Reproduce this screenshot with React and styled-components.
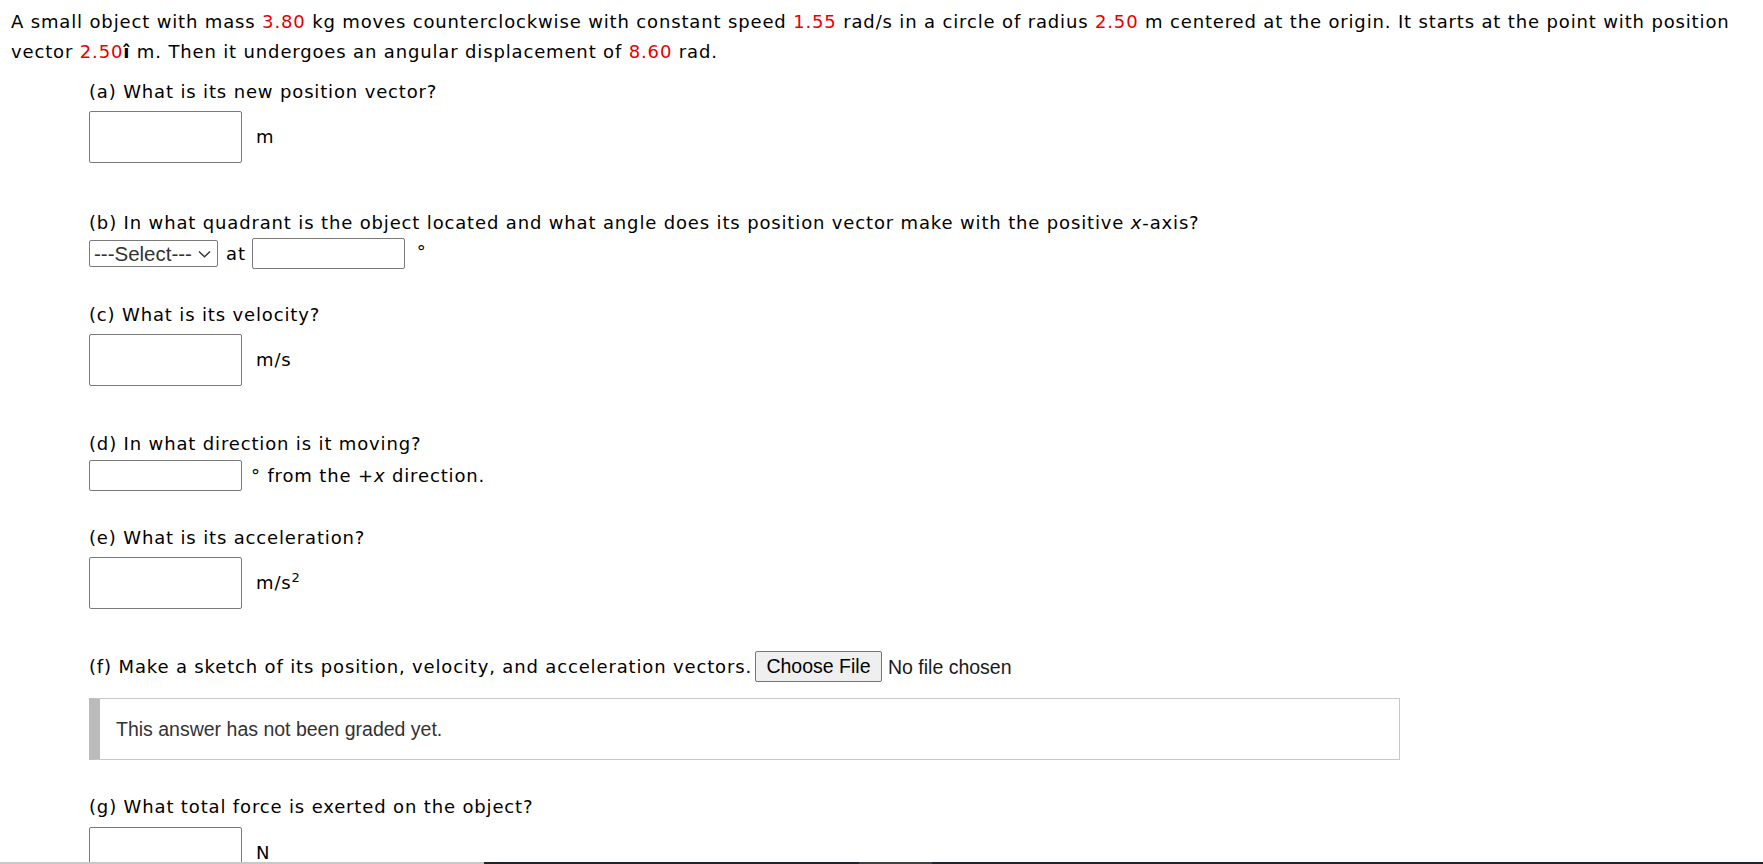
import * as React from "react"
import styled, { createGlobalStyle } from "styled-components"

const GlobalStyle = createGlobalStyle`
  html, body {
    margin: 0;
    padding: 0;
    background: #ffffff;
  }
  body {
    font-family: "DejaVu Sans", Verdana, sans-serif;
    font-size: 18px;
    letter-spacing: 0.85px;
    color: #000000;
  }
`

const Page = styled.main`
  padding: 7px 0 0 11px;
`

const Intro = styled.p`
  margin: 0;
  line-height: 30px;
`

const Red = styled.span`
  color: #e60000;
`

const Questions = styled.div`
  margin: 10px 0 0 78px;
  display: flex;
  flex-direction: column;
`

const Part = styled.section`
  margin-bottom: ${(p) => p.$gap || 31}px;
`

const Prompt = styled.div`
  line-height: 30px;
`

const Row = styled.div`
  display: flex;
  align-items: center;
  margin-top: ${(p) => p.$top || 0}px;
`

const TextBox = styled.input.attrs({ type: "text" })`
  box-sizing: border-box;
  width: ${(p) => p.$w || 153}px;
  height: ${(p) => (p.$tall ? 52 : 31)}px;
  margin: 0;
  padding: 2px 6px;
  border: 1px solid #7a7a7a;
  border-radius: 2px;
  background: #ffffff;
  font-family: "DejaVu Sans", Verdana, sans-serif;
  font-size: 18px;
  outline: none;
`

const Unit = styled.span`
  margin-left: ${(p) => (p.$near ? 9 : 14)}px;
  line-height: 30px;
  white-space: nowrap;
`

const Sup = styled.sup`
  font-size: 13px;
  line-height: 0;
  vertical-align: 7px;
`

const Word = styled.span`
  margin: 0 6px 0 8px;
`

const SelectWrap = styled.span`
  position: relative;
  display: inline-flex;
  align-items: center;
`

const Select = styled.select`
  appearance: none;
  box-sizing: border-box;
  width: 129px;
  height: 27px;
  margin: 0;
  padding: 0 22px 0 4px;
  border: 1px solid #7a7a7a;
  border-radius: 2px;
  background: #ffffff;
  color: #333333;
  font-family: "Liberation Sans", Arial, sans-serif;
  font-size: 20.5px;
  letter-spacing: 0;
  outline: none;
`

const Chevron = styled.svg`
  position: absolute;
  right: 7px;
  top: 10px;
  pointer-events: none;
`

const Degree = styled.span`
  margin-left: 12px;
  align-self: flex-start;
  line-height: 28px;
`

const FileLine = styled.div`
  display: flex;
  align-items: center;
  line-height: 30px;
`

const FileButton = styled.button`
  box-sizing: border-box;
  width: 127px;
  height: 31px;
  margin-left: 3px;
  padding: 0;
  border: 1px solid #767676;
  border-radius: 2px;
  background: #efefef;
  color: #000000;
  font-family: "Liberation Sans", Arial, sans-serif;
  font-size: 19.5px;
  letter-spacing: 0;
`

const FileStatus = styled.span`
  margin-left: 6px;
  font-family: "Liberation Sans", Arial, sans-serif;
  font-size: 19.5px;
  letter-spacing: 0;
  color: #1a1a1a;
`

const GradeNote = styled.div`
  box-sizing: border-box;
  width: 1311px;
  height: 62px;
  margin-top: 16px;
  display: flex;
  align-items: center;
  padding-left: 16px;
  border: 1px solid #c8c8c8;
  border-left: 11px solid #bbbbbb;
  font-family: "Liberation Sans", Arial, sans-serif;
  font-size: 19.5px;
  letter-spacing: 0;
  color: #333333;
`

const BottomBar = styled.div`
  position: fixed;
  left: 0;
  right: 0;
  bottom: 0;
  height: 2px;
  display: grid;
  grid-template-columns: 484px 375px 73px 1fr;
`

const BarPiece = styled.span`
  background: ${(p) => p.$c};
`

const Chev = () => (
  <Chevron width="13" height="8" viewBox="0 0 13 8">
    <path d="M1 1.5 L6.5 6.8 L12 1.5" fill="none" stroke="#333" strokeWidth="1.4" />
  </Chevron>
)

export default function App() {
  return (
    <>
      <GlobalStyle />
      <Page>
        <Intro>
          A small object with mass <Red>3.80</Red> kg moves counterclockwise with
          constant speed <Red>1.55</Red> rad/s in a circle of radius <Red>2.50</Red> m
          centered at the origin. It starts at the point with position vector{" "}
          <Red>2.50</Red>
          <b>î</b> m. Then it undergoes an angular displacement of <Red>8.60</Red> rad.
        </Intro>

        <Questions>
          <Part $gap={45}>
            <Prompt>(a) What is its new position vector?</Prompt>
            <Row $top={4}>
              <TextBox $tall />
              <Unit>m</Unit>
            </Row>
          </Part>

          <Part $gap={31}>
            <Prompt>
              (b) In what quadrant is the object located and what angle does its
              position vector make with the positive <i>x</i>-axis?
            </Prompt>
            <Row>
              <SelectWrap>
                <Select defaultValue="">
                  <option value="">---Select---</option>
                  <option>first quadrant</option>
                  <option>second quadrant</option>
                  <option>third quadrant</option>
                  <option>fourth quadrant</option>
                </Select>
                <Chev />
              </SelectWrap>
              <Word>at</Word>
              <TextBox />
              <Degree>°</Degree>
            </Row>
          </Part>

          <Part $gap={43}>
            <Prompt>(c) What is its velocity?</Prompt>
            <Row $top={4}>
              <TextBox $tall />
              <Unit>m/s</Unit>
            </Row>
          </Part>

          <Part $gap={32}>
            <Prompt>(d) In what direction is it moving?</Prompt>
            <Row $top={1}>
              <TextBox />
              <Unit $near>
                ° from the +<i>x</i> direction.
              </Unit>
            </Row>
          </Part>

          <Part $gap={42}>
            <Prompt>(e) What is its acceleration?</Prompt>
            <Row $top={4}>
              <TextBox $tall />
              <Unit>
                m/s<Sup>2</Sup>
              </Unit>
            </Row>
          </Part>

          <Part $gap={32}>
            <FileLine>
              (f) Make a sketch of its position, velocity, and acceleration vectors.
              <FileButton type="button">Choose File</FileButton>
              <FileStatus>No file chosen</FileStatus>
            </FileLine>
            <GradeNote>This answer has not been graded yet.</GradeNote>
          </Part>

          <Part>
            <Prompt>(g) What total force is exerted on the object?</Prompt>
            <Row $top={5}>
              <TextBox $tall />
              <Unit>N</Unit>
            </Row>
          </Part>
        </Questions>
      </Page>
      <BottomBar>
        <BarPiece $c="#c8c8c8" />
        <BarPiece $c="#1f2428" />
        <BarPiece $c="#3c4144" />
        <BarPiece $c="#1f2428" />
      </BottomBar>
    </>
  )
}
